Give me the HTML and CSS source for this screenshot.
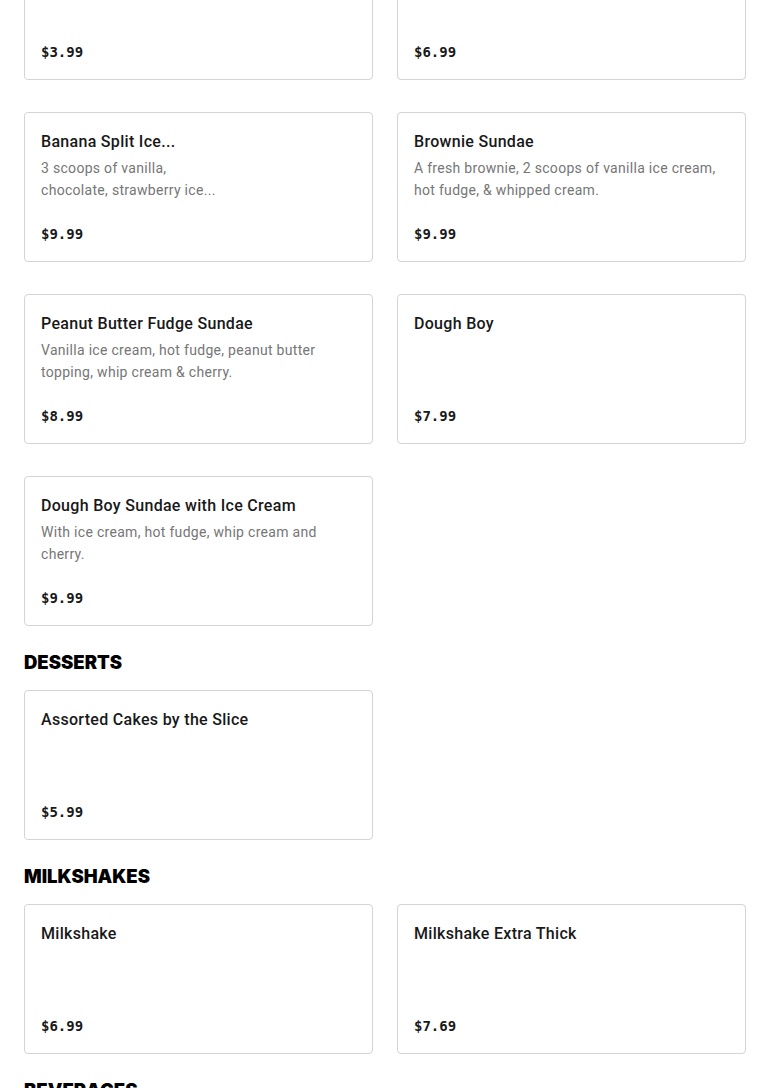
FILE: index.html
```html
<!DOCTYPE html>
<html lang="en">
<head>
<meta charset="utf-8">
<title>Menu</title>
<link rel="stylesheet" href="styles.css">
</head>
<body>
<main class="menu">
  <section class="section">
    <div class="grid">
      <article class="card">
        <div class="card-price">$3.99</div>
      </article>
      <article class="card">
        <div class="card-price">$6.99</div>
      </article>
      <article class="card card-media">
        <div class="card-body">
          <h3 class="card-title">Banana Split Ice...</h3>
          <p class="card-desc">3 scoops of vanilla, chocolate, strawberry ice...</p>
          <div class="card-price">$9.99</div>
        </div>
        <div class="card-img"></div>
      </article>
      <article class="card">
        <h3 class="card-title">Brownie Sundae</h3>
        <p class="card-desc">A fresh brownie, 2 scoops of vanilla ice cream, hot fudge, &amp; whipped cream.</p>
        <div class="card-price">$9.99</div>
      </article>
      <article class="card">
        <h3 class="card-title">Peanut Butter Fudge Sundae</h3>
        <p class="card-desc">Vanilla ice cream, hot fudge, peanut butter topping, whip cream &amp; cherry.</p>
        <div class="card-price">$8.99</div>
      </article>
      <article class="card">
        <h3 class="card-title">Dough Boy</h3>
        <div class="card-price">$7.99</div>
      </article>
      <article class="card">
        <h3 class="card-title">Dough Boy Sundae with Ice Cream</h3>
        <p class="card-desc">With ice cream, hot fudge, whip cream and cherry.</p>
        <div class="card-price">$9.99</div>
      </article>
    </div>
  </section>

  <section class="section">
    <h2 class="section-title">DESSERTS</h2>
    <div class="grid">
      <article class="card">
        <h3 class="card-title">Assorted Cakes by the Slice</h3>
        <div class="card-price">$5.99</div>
      </article>
    </div>
  </section>

  <section class="section">
    <h2 class="section-title">MILKSHAKES</h2>
    <div class="grid">
      <article class="card">
        <h3 class="card-title">Milkshake</h3>
        <div class="card-price">$6.99</div>
      </article>
      <article class="card">
        <h3 class="card-title">Milkshake Extra Thick</h3>
        <div class="card-price">$7.69</div>
      </article>
    </div>
  </section>

  <section class="section">
    <h2 class="section-title">BEVERAGES</h2>
  </section>
</main>
</body>
</html>
```

FILE: styles.css
```css
* {
  box-sizing: border-box;
}

html, body {
  margin: 0;
  padding: 0;
  background: #ffffff;
}

body {
  font-family: Roboto, "Noto Sans", sans-serif;
  color: #191919;
  overflow: hidden;
}

.menu {
  padding: 0 24px;
  margin-top: -70px;
}

.section-title {
  margin: 22px 0 14px;
  font-family: Inter, sans-serif;
  font-weight: 900;
  font-size: 18.5px;
  line-height: 28px;
  color: #000000;
}

.grid {
  display: grid;
  grid-template-columns: minmax(0, 1fr) minmax(0, 1fr);
  column-gap: 24px;
  row-gap: 32px;
}

.card {
  height: 150px;
  border: 1px solid #d4d4d4;
  border-radius: 4px;
  padding: 17px 16px 15px;
  display: flex;
  flex-direction: column;
  background: #fff;
}

.card-media {
  flex-direction: row;
  gap: 16px;
}

.card-body {
  flex: 1;
  min-width: 0;
  display: flex;
  flex-direction: column;
}

.card-img {
  width: 120px;
  flex: none;
}

.card-title {
  margin: 0;
  font-size: 16px;
  line-height: 24px;
  font-weight: 500;
  letter-spacing: 0.3px;
  color: #191919;
}

.card-desc {
  margin: 3px 0 0;
  font-size: 14px;
  line-height: 22px;
  letter-spacing: 0.3px;
  color: #767676;
}

.card-price {
  margin-top: auto;
  font-family: "DejaVu Sans Mono", monospace;
  font-weight: bold;
  font-size: 14px;
  line-height: 24px;
  color: #191919;
}
```
